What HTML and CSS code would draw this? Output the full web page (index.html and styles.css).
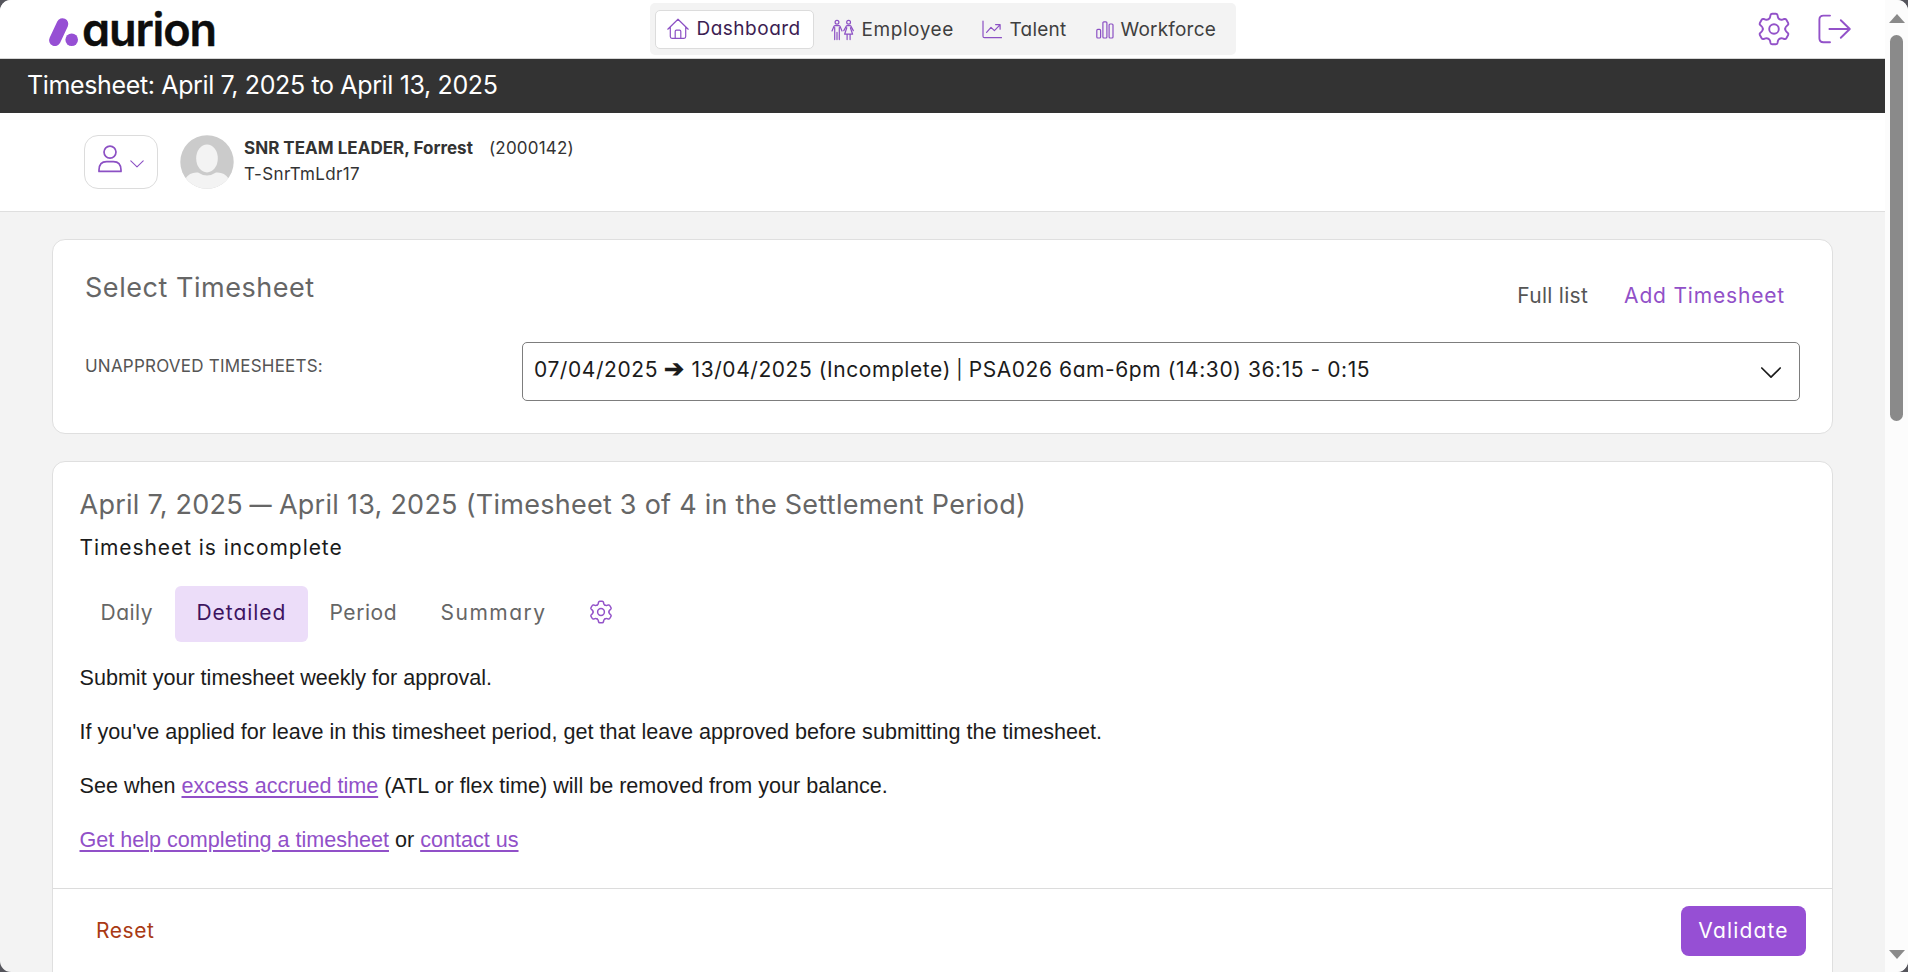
FILE: index.html
```html
<!DOCTYPE html>
<html lang="en">
<head>
<meta charset="utf-8">
<title>Aurion Timesheet</title>
<link rel="stylesheet" href="styles.css">
</head>
<body>
<svg width="0" height="0" class="defs">
  <defs>
    <path id="tooth" d="M-5.6 -9.7Q-4.2 -10.5 -3.9 -12L-3.5 -13.9Q-3.1 -15.3 -1.8 -15.3H1.8Q3.1 -15.3 3.5 -13.9L3.9 -12Q4.2 -10.5 5.6 -9.7"/>
    <symbol id="gear" viewBox="-17 -17 34 34">
      <use href="#tooth"/><use href="#tooth" transform="rotate(60)"/><use href="#tooth" transform="rotate(120)"/>
      <use href="#tooth" transform="rotate(180)"/><use href="#tooth" transform="rotate(240)"/><use href="#tooth" transform="rotate(300)"/>
      <circle r="4.8"/>
    </symbol>
  </defs>
</svg>
<div class="window">
  <div class="page">
    <header class="header">
      <svg class="logo" width="170" height="40" viewBox="0 0 170 40">
        <path d="M14.5 14L6.9 30.2" stroke="#964fd4" stroke-width="11.6" stroke-linecap="round"/>
        <circle cx="23.7" cy="29.7" r="6.3" fill="#964fd4"/>
        <text x="34" y="36" class="wordmark" textLength="135">aurion</text>
      </svg>
      <nav class="nav">
        <a class="nav-item active">
          <svg width="22" height="22" viewBox="0 0 22 22"><path d="M.8 11.2L11 1.2L21.2 11.2M3.3 9V18.6Q3.3 20.4 5 20.4H17Q18.7 20.4 18.7 18.6V9M8.2 20.2V13.6Q8.2 12.2 9.4 12.2H12.6Q13.8 12.2 13.8 13.6V20.2"/></svg>
          <span class="t-dash">Dashboard</span></a>
        <a class="nav-item">
          <svg width="23" height="22" viewBox="0 0 23 22"><circle cx="6" cy="3.2" r="1.9"/><circle cx="17.6" cy="3.2" r="1.9"/><path d="M1 12L3 7.3Q3.4 6.6 4.2 6.6H7.8Q8.6 6.6 9 7.3L11 12M3.7 8.5V20.6M8.3 8.5V20.6M6 13.4V20.6M12.8 11.6L15.2 7.2Q15.6 6.6 16.2 6.6H19Q19.6 6.6 20 7.2L22.3 11.6M15.8 8.7L13.6 15.2H21.6L19.4 8.7M16.1 15.4V20.6M19.1 15.4V20.6"/></svg>
          <span class="t-emp">Employee</span></a>
        <a class="nav-item talent">
          <svg width="20" height="20" viewBox="0 0 20 20"><path d="M1 1V16.2Q1 17.7 2.5 17.7H19.5M4.6 12.4L9 7.4L12.4 10.6L18 4.8M13.6 4.6H18.1V9.2"/></svg>
          <span class="t-tal">Talent</span></a>
        <a class="nav-item work">
          <svg width="18" height="20" viewBox="0 0 18 20"><rect x=".8" y="9.4" width="3.8" height="8.6" rx="1"/><rect x="6.9" y="1.8" width="4" height="16.2" rx="1"/><rect x="13.1" y="4" width="3.9" height="14" rx="1"/></svg>
          <span class="t-work">Workforce</span></a>
      </nav>
      <div class="header-tools">
        <svg class="ico2" width="34" height="34"><use href="#gear"/></svg>
        <svg class="ico2" width="34" height="30" viewBox="0 0 34 30"><path d="M12 1.6H5.4Q1.4 1.6 1.4 5.6V24.2Q1.4 28.2 5.4 28.2H12M11.4 15H31.6M22.8 6.2L31.8 15L22.8 23.8"/></svg>
      </div>
    </header>
    <div class="titlebar">Timesheet: April 7, 2025 to April 13, 2025</div>
    <section class="person">
      <div class="person-btn">
        <svg width="24" height="28" viewBox="0 0 24 28"><circle cx="12" cy="7.1" r="6"/><path d="M1 26.4V25Q1.2 16.7 8.6 16.7H15.4Q22.8 16.7 23 25V26.4Z"/></svg>
        <svg class="chev" width="14" height="8" viewBox="0 0 14 8"><path d="M.8 .8L7 6.8L13.2 .8"/></svg>
      </div>
      <svg class="avatar" width="54" height="54" viewBox="0 0 54 54"><defs><clipPath id="round"><circle cx="27" cy="27" r="26.7"/></clipPath></defs><g clip-path="url(#round)"><rect width="54" height="54" fill="#cbcbcb"/><ellipse cx="27" cy="23.4" rx="10.8" ry="14" fill="#f3f3f3"/><path d="M5 44Q10 36.8 18 37.6Q27 43.6 36 37.6Q44 36.8 49 44V54H5Z" fill="#f3f3f3"/></g></svg>
      <div class="who">
        <div class="who-top"><strong>SNR TEAM LEADER, Forrest</strong><span class="who-id">(2000142)</span></div>
        <div class="who-sub">T-SnrTmLdr17</div>
      </div>
    </section>
    <main class="main">
      <section class="card select-card">
        <div class="select-head">
          <h2 class="h2-select">Select Timesheet</h2>
          <div class="links"><a class="full">Full list</a><a class="add">Add Timesheet</a></div>
        </div>
        <div class="field">
          <label>UNAPPROVED TIMESHEETS:</label>
          <div class="select"><span>07/04/2025 <b>➔</b> 13/04/2025 (Incomplete) <i>|</i> PSA026 6am-6pm (14:30) 36:15 - 0:15</span>
            <svg width="20" height="12" viewBox="0 0 20 12"><path d="M.8 1L10 10.2L19.2 1"/></svg></div>
        </div>
      </section>
      <section class="card sheet">
        <div class="sheet-body">
          <h2 class="h2-sheet">April 7, 2025 <span class="dash">—</span> April 13, 2025 (Timesheet 3 of 4 in the Settlement Period)</h2>
          <div class="status">Timesheet is incomplete</div>
          <div class="tabs">
            <a class="tab daily">Daily</a><a class="tab detailed">Detailed</a><a class="tab period">Period</a><a class="tab summary">Summary</a>
            <svg class="ico2 tab-gear" width="24" height="24"><use href="#gear"/></svg>
          </div>
          <p>Submit your timesheet weekly for approval.</p>
          <p>If you've applied for leave in this timesheet period, get that leave approved before submitting the timesheet.</p>
          <p>See when <a>excess accrued time</a> (ATL or flex time) will be removed from your balance.</p>
          <p><a>Get help completing a timesheet</a> or <a>contact us</a></p>
        </div>
        <footer class="sheet-foot"><a class="reset">Reset</a><button class="validate">Validate</button></footer>
      </section>
    </main>
  </div>
  <div class="scrollbar">
    <svg width="16" height="9" viewBox="0 0 16 9"><path d="M0 9L8 0L16 9Z"/></svg>
    <div class="thumb"></div>
    <svg class="down" width="16" height="9" viewBox="0 0 16 9"><path d="M0 0L8 9L16 0Z"/></svg>
  </div>
</div>
</body>
</html>
```
FILE: styles.css
```css
* { box-sizing: border-box; }
body { margin: 0; background: #55555c; font-family: Inter, "Open Sans", sans-serif; font-feature-settings: "cv11"; color: #1b1b1b; white-space: nowrap; }
h2, p { margin: 0; font-weight: 400; }
svg { flex: none; fill: none; stroke: #8c50c4; stroke-width: 1.2; stroke-linejoin: round; stroke-linecap: round; }
.defs { position: absolute; }
.ico2 { stroke: #9352c9; stroke-width: 1.9; }

.window { display: flex; width: 1908px; height: 972px; border-radius: 11px; overflow: hidden; background: #f3f3f3; }
.page { width: 1885px; height: 972px; overflow: hidden; }

.header { display: grid; grid-template-columns: 1fr auto 1fr; height: 59px; background: #fff; border-bottom: 1px solid #d6d6d6; }
.logo { margin: 10px 0 0 48px; stroke: none; overflow: visible; }
.wordmark { font-size: 45px; font-weight: 600; fill: #0d0d0d; stroke: #0d0d0d; stroke-width: .4; }
.nav { display: flex; align-items: flex-start; margin-top: 3px; height: 52px; padding: 7px 7px 7px 5px; background: #f3f3f3; border-radius: 5px; font-size: 19px; line-height: 38px; color: #3f3f3f; }
.nav-item { display: flex; align-items: center; gap: 8px; width: 151px; height: 39px; padding-left: 17px; }
.nav-item svg { margin-top: 1px; }
.nav-item.active svg { margin-top: -1px; }
.nav-item span { height: 39px; line-height: 39px; }
.nav-item.active span { line-height: 38px; }
.nav-item.active { width: 159px; padding-left: 11px; background: #fff; border: 1px solid #dcdcdc; border-radius: 5px; color: #3c1d52; }
.nav-item.talent { width: 114px; }
.nav-item.work { width: 150px; gap: 7px; }
.t-dash { letter-spacing: .5px; }
.t-emp { letter-spacing: .58px; }
.t-tal { letter-spacing: .25px; }
.t-work { letter-spacing: .2px; }
.header-tools { display: flex; justify-content: flex-end; align-items: center; gap: 27px; padding: 0 33px 0 0; }

.titlebar { height: 54px; padding-left: 27px; background: #333; color: #fff; font-size: 25px; line-height: 53px; letter-spacing: -.36px; }

.person { display: flex; align-items: flex-start; height: 99px; padding: 22px 0 0 84px; background: #fff; border-bottom: 1px solid #dfdfdf; color: #333; }
.person-btn { display: flex; gap: 8px; width: 74px; height: 54px; padding: 9px 0 0 13px; border: 1px solid #dcdcdc; border-radius: 14px; }
.person-btn svg { stroke-width: 1.7; }
.person-btn .chev { margin-top: 15px; stroke-width: 1.1; }
.avatar { margin: 0 0 0 22px; stroke: none; }
.who { margin-left: 10px; font-size: 17px; line-height: 26px; }
.who-top { display: flex; gap: 16px; }
.who-top strong { letter-spacing: .02px; }
.who-id { letter-spacing: .2px; }
.who-sub { letter-spacing: .35px; }

.main { padding: 27px 52px 0; }
.card { background: #fff; border: 1px solid #dfdfdf; border-radius: 13px; }
.select-card { height: 195px; padding: 0 32px; }
.select-head { display: flex; justify-content: space-between; height: 102px; }
.h2-select { padding-top: 28px; font-size: 27px; line-height: 40px; letter-spacing: .54px; color: #666; }
.links { display: flex; gap: 36px; padding: 41px 15px 0 0; font-size: 21px; line-height: 30px; }
.full { color: #555; letter-spacing: .28px; }
.add { color: #9150c8; letter-spacing: .82px; }
.field { display: grid; grid-template-columns: 437px 1278px; }
.field label { font-size: 17px; line-height: 48px; letter-spacing: .22px; color: #555; }
.select { display: flex; justify-content: space-between; height: 59px; padding: 0 18px 0 11px; border: 1px solid #7d7d7d; border-radius: 5px; font-size: 21px; line-height: 53px; letter-spacing: .57px; }
.select b { font-size: 24px; line-height: 1; }
.select i { font-style: normal; font-size: 19px; margin: 0 -1px; position: relative; top: -1px; }
.select svg { margin-top: 24px; stroke: #1b1b1b; stroke-width: 1.7; }

.sheet { margin-top: 27px; height: 600px; }
.sheet-body { height: 427px; padding: 23px 26.5px 0; border-bottom: 1px solid #dcdcdc; }
.h2-sheet { font-size: 27px; line-height: 40px; letter-spacing: .26px; color: #666; }
.dash { display: inline-block; transform: scaleX(.82); margin: 0 -3.5px; }
.status { margin-top: 8px; font-size: 21px; line-height: 30px; letter-spacing: .93px; }
.tabs { display: flex; margin: 23px 0 22px; height: 56px; font-size: 21px; line-height: 53px; color: #666; }
.daily { width: 95px; padding-left: 21px; letter-spacing: .5px; }
.detailed { width: 133px; padding-left: 22px; letter-spacing: .95px; background: #ecddf9; border-radius: 6px; color: #3d1460; }
.period { width: 111px; padding-left: 22px; letter-spacing: .55px; }
.summary { width: 149px; padding-left: 22px; letter-spacing: 1.5px; }
.tab-gear { margin: 14px 0 0 21px; stroke-width: 2.1; }
p { font-family: "Liberation Sans", Arial, sans-serif; font-size: 21.58px; line-height: 28px; margin-bottom: 26px; }
p a { color: #9150c8; text-decoration: underline; text-decoration-thickness: 2px; text-underline-offset: 3px; }
.sheet-foot { display: flex; justify-content: space-between; padding: 17px 26px 0 43px; font-size: 21px; }
.reset { color: #a93a14; line-height: 50px; letter-spacing: .55px; }
.validate { width: 125px; height: 50px; padding: 0 0 2px 0; border: 0; border-radius: 8px; background: #964fd4; color: #fff; font: inherit; font-feature-settings: inherit; letter-spacing: 1.15px; }

.scrollbar { display: flex; flex-direction: column; align-items: center; width: 23px; height: 972px; padding: 14px 0 13px; background: #fcfcfc; }
.scrollbar svg { fill: #8a8a8a; stroke: none; }
.thumb { width: 13px; height: 386px; margin-top: 12px; border-radius: 7px; background: #8a8a8a; }
.down { margin-top: auto; }
```
